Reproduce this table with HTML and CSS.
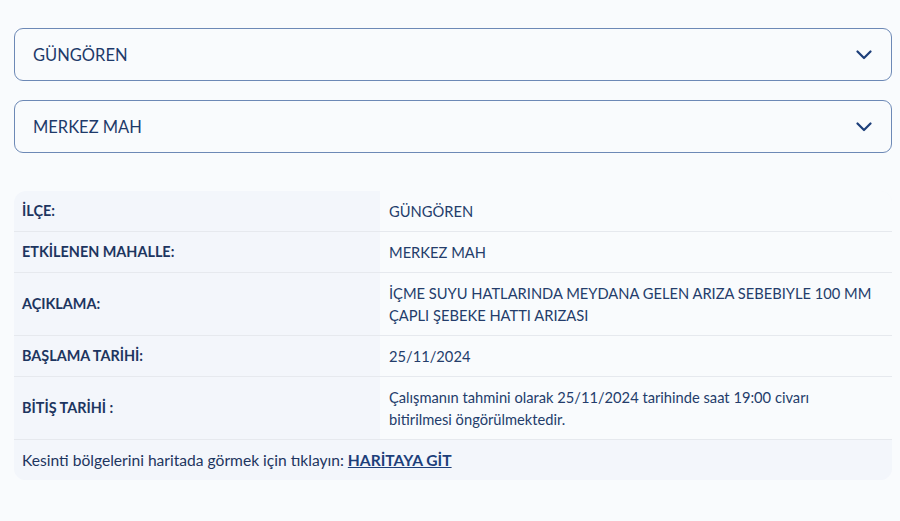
FILE: index.html
```html
<!DOCTYPE html>
<html lang="tr">
<head>
    <meta charset="UTF-8">
    <meta name="viewport" content="width=device-width, initial-scale=1.0">
    <title>Arıza Kesinti Bilgisi</title>
    <link rel="stylesheet" href="styles.css">
</head>
<body>
    <main class="page">
        <div class="select">
            <span>GÜNGÖREN</span>
            <svg class="chevron" width="16" height="10" viewBox="0 0 16 10"><path d="M1.5 1.5 L8 8 L14.5 1.5" fill="none" stroke="#1d3f7a" stroke-width="2.2" stroke-linecap="round" stroke-linejoin="round"/></svg>
        </div>
        <div class="select">
            <span>MERKEZ MAH</span>
            <svg class="chevron" width="16" height="10" viewBox="0 0 16 10"><path d="M1.5 1.5 L8 8 L14.5 1.5" fill="none" stroke="#1d3f7a" stroke-width="2.2" stroke-linecap="round" stroke-linejoin="round"/></svg>
        </div>

        <table class="info">
            <tr>
                <th>İLÇE:</th>
                <td>GÜNGÖREN</td>
            </tr>
            <tr>
                <th>ETKİLENEN MAHALLE:</th>
                <td>MERKEZ MAH</td>
            </tr>
            <tr>
                <th>AÇIKLAMA:</th>
                <td>İÇME SUYU HATLARINDA MEYDANA GELEN ARIZA SEBEBIYLE 100 MM ÇAPLI ŞEBEKE HATTI ARIZASI</td>
            </tr>
            <tr>
                <th>BAŞLAMA TARİHİ:</th>
                <td>25/11/2024</td>
            </tr>
            <tr>
                <th>BİTİŞ TARİHİ :</th>
                <td class="narrow">Çalışmanın tahmini olarak 25/11/2024 tarihinde saat 19:00 civarı bitirilmesi öngörülmektedir.</td>
            </tr>
            <tr class="map-row">
                <td colspan="2">Kesinti bölgelerini haritada görmek için tıklayın: <a href="#">HARİTAYA GİT</a></td>
            </tr>
        </table>
    </main>
</body>
</html>
```

FILE: styles.css
```css
body {
    margin: 0;
    background-color: #f9fbfd;
    font-family: 'Lato', 'Noto Sans', sans-serif;
    color: #1d3560;
}
.page {
    padding: 28px 8px 40px 14px;
}
.select {
    display: flex;
    align-items: center;
    justify-content: space-between;
    height: 51px;
    padding: 0 18px;
    margin-bottom: 19px;
    border: 1.5px solid #6d89b6;
    border-radius: 9px;
    font-size: 16.5px;
    color: #1e3a6a;
}
.chevron {
    margin-right: 1px;
}
.info {
    width: 100%;
    margin-top: 38px;
    border-collapse: separate;
    border-spacing: 0;
    background-color: #f3f6fb;
    border-radius: 12px;
    overflow: hidden;
    font-size: 14.4px;
    line-height: 22px;
}
.info th,
.info td {
    padding: 9px 8px;
    border-bottom: 1px solid #e6e9ee;
    text-align: left;
    vertical-align: middle;
}
.info th {
    width: 350px;
    font-weight: 700;
    color: #1d3560;
}
.info td {
    padding-left: 9px;
    background-color: #f9fbfd;
    color: #243d6b;
    font-size: 14.7px;
}
.info td.narrow {
    padding-right: 30px;
}
.info tr.map-row td {
    padding-left: 8px;
    background-color: #f3f6fb;
    border-bottom: none;
    color: #1d3560;
    font-size: 15.6px;
}
.map-row a {
    color: #1d3f7a;
    font-weight: 700;
    text-decoration: underline;
}
```
